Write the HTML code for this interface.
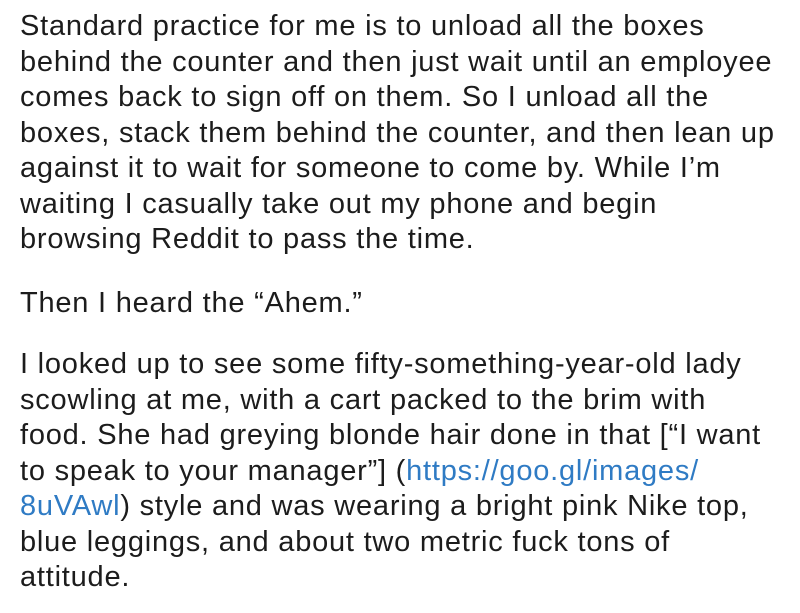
<!DOCTYPE html>
<html><head><meta charset="utf-8"><style>
html,body{margin:0;padding:0;background:#fff;width:800px;height:613px;overflow:hidden}
.t{position:absolute;left:20px;font-family:"Liberation Sans",Arial,sans-serif;font-size:29px;letter-spacing:0.78px;line-height:35.5px;color:#1c1c1c;white-space:nowrap}
.t div{height:35.5px}
a{color:#2f7bc4;text-decoration:none}
</style></head><body>
<div class="t" style="top:9px">
<div>Standard practice for me is to unload all the boxes</div>
<div>behind the counter and then just wait until an employee</div>
<div>comes back to sign off on them. So I unload all the</div>
<div>boxes, stack them behind the counter, and then lean up</div>
<div>against it to wait for someone to come by. While I’m</div>
<div>waiting I casually take out my phone and begin</div>
<div>browsing Reddit to pass the time.</div>
</div>
<div class="t" style="top:286px"><div>Then I heard the “Ahem.”</div></div>
<div class="t" style="top:347px">
<div>I looked up to see some fifty-something-year-old lady</div>
<div>scowling at me, with a cart packed to the brim with</div>
<div>food. She had greying blonde hair done in that [“I want</div>
<div>to speak to your manager”] (<a>https://goo.gl/images/</a></div>
<div><a>8uVAwl</a>) style and was wearing a bright pink Nike top,</div>
<div>blue leggings, and about two metric fuck tons of</div>
<div>attitude.</div>
</div>
</body></html>
